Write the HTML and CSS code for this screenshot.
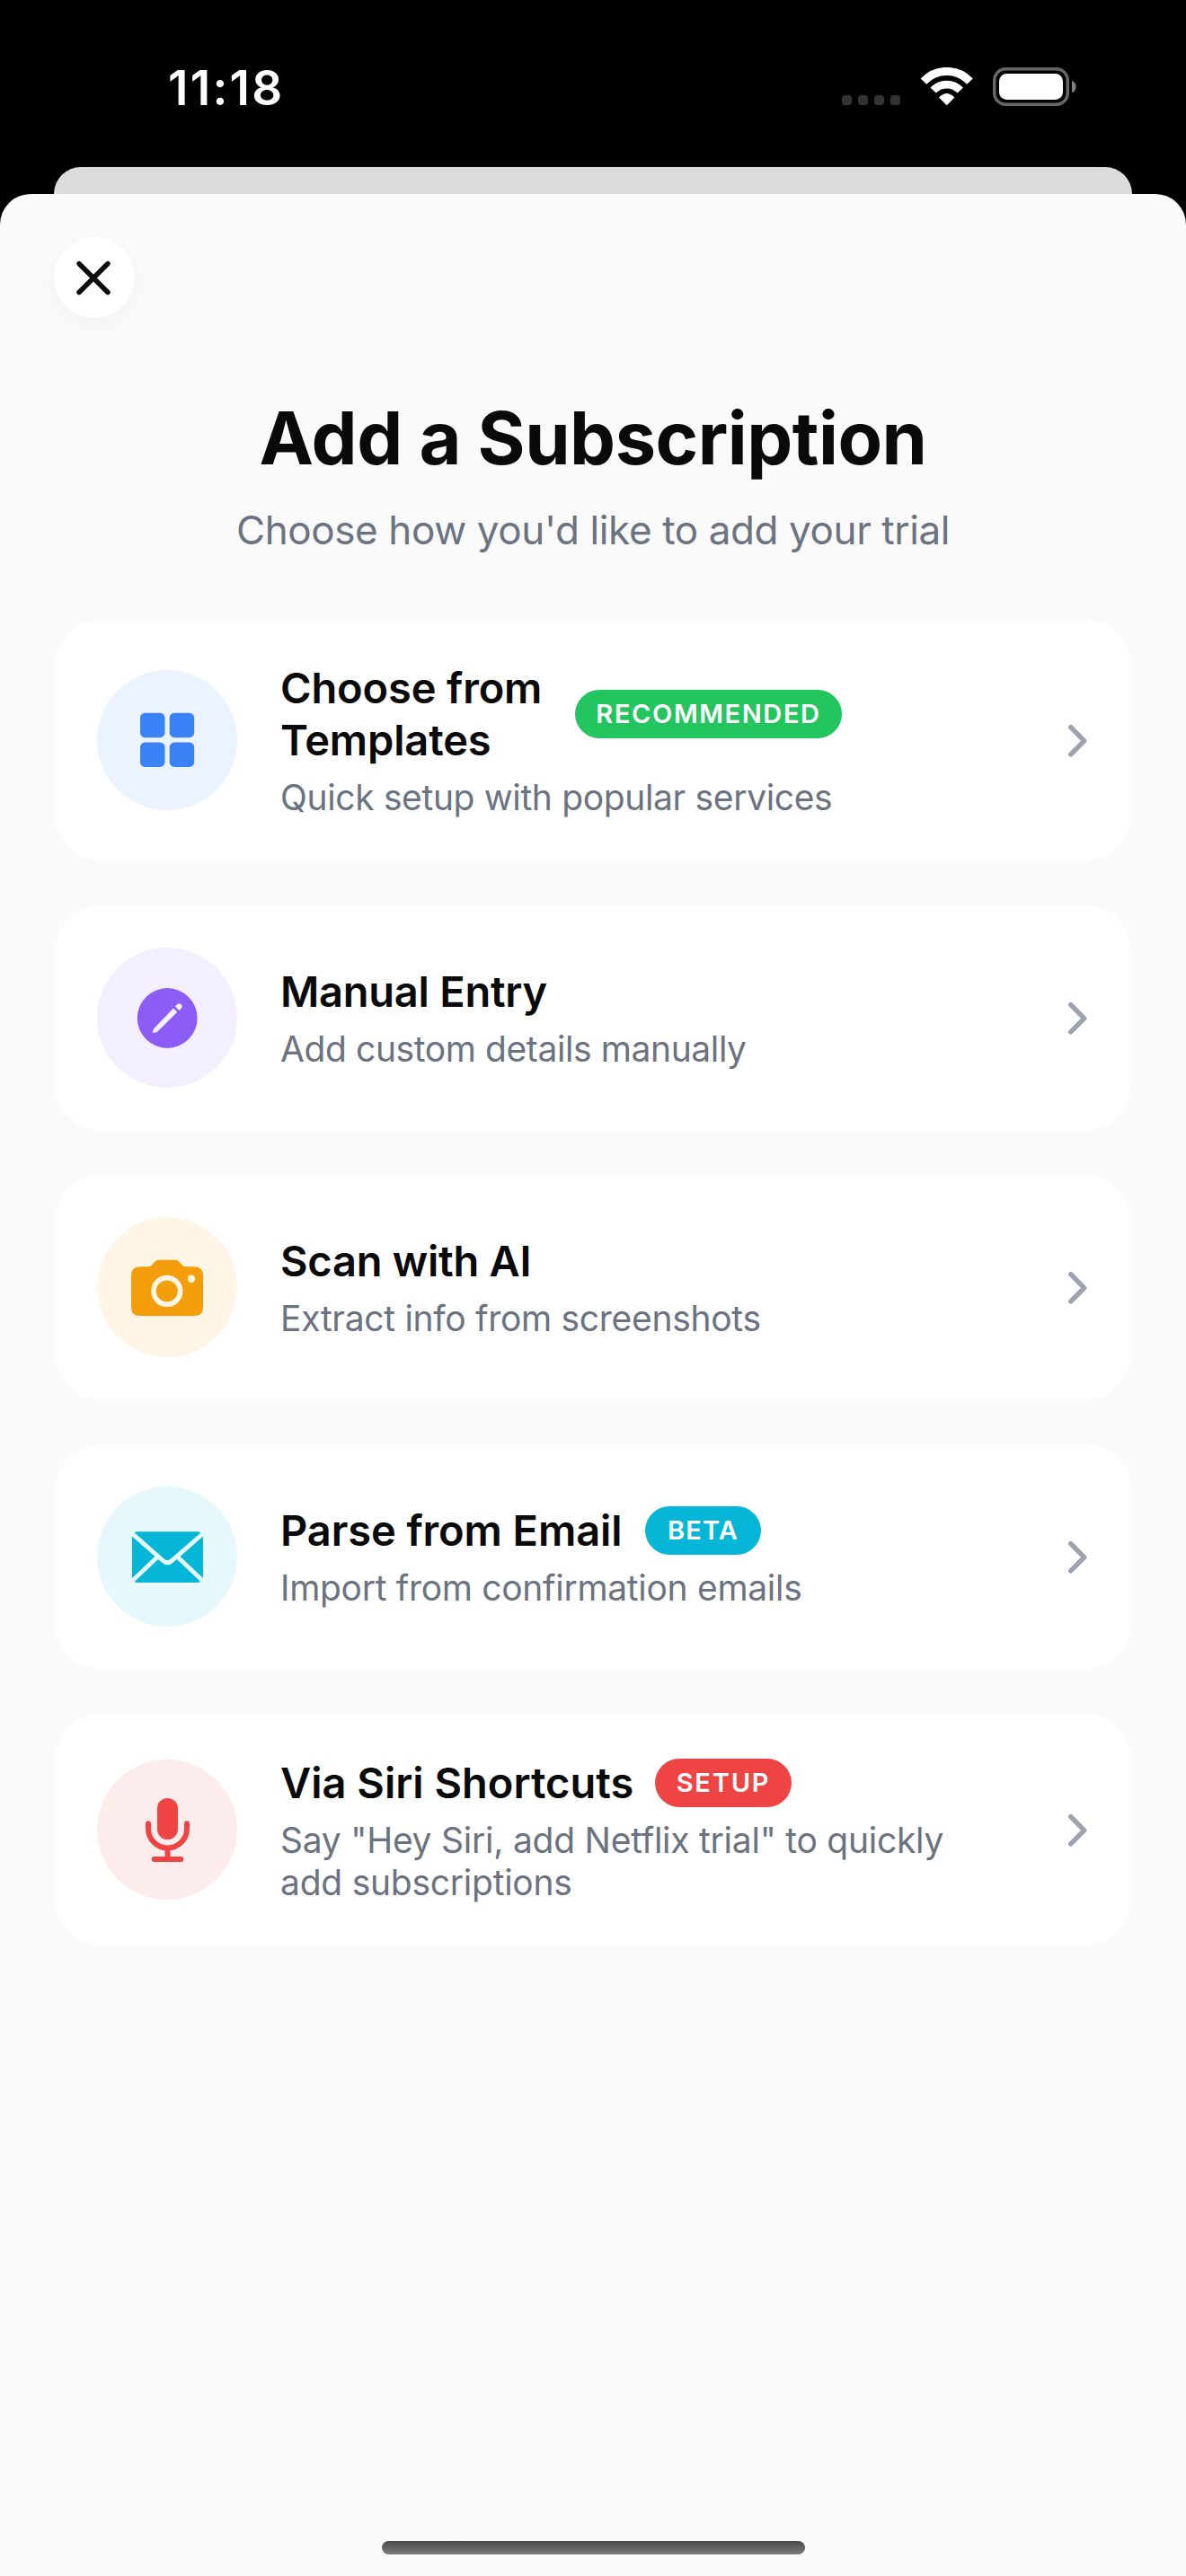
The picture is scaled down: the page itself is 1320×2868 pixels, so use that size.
FILE: index.html
```
<!DOCTYPE html>
<html lang="en">
<head>
<meta charset="utf-8">
<title>Add a Subscription</title>
<link rel="stylesheet" href="styles.css">
</head>
<body>
<header class="status">
  <span class="time">11:18</span>
  <div class="indicators">
    <div class="signal"><i></i><i></i><i></i><i></i></div>
    <svg class="wifi" width="59" height="43" viewBox="0 0 59 43" fill="none" stroke="#fff">
      <path d="M3.9 15.6A35.3 35.3 0 0 1 55.5 15.6" stroke-width="9"/>
      <path d="M14.6 25.6A20.7 20.7 0 0 1 44.8 25.6" stroke-width="8.7"/>
      <path d="M21 33.6Q29.7 24.4 38.4 33.6L30.6 41.6Q29.7 42.4 28.8 41.6Z" fill="#fff" stroke="none"/>
    </svg>
    <svg class="battery" width="93" height="43" viewBox="0 0 93 43">
      <rect x="1.75" y="1.75" width="81.5" height="39.5" rx="12.5" fill="none" stroke="#666" stroke-width="3.5"/>
      <rect x="7" y="7" width="71" height="29" rx="8.5" fill="#fff"/>
      <path d="M88 14.7a7.4 7.4 0 0 1 0 13.6z" fill="#808080"/>
    </svg>
  </div>
</header>
<div class="back-sheet"></div>
<main class="sheet">
  <button class="close" aria-label="Close">
    <svg width="46" height="46" viewBox="0 0 46 46" fill="none" stroke="#0a0a0a" stroke-width="5.4" stroke-linecap="round"><path d="M6 7.5L38 39.5M38 7.5L6 39.5"/></svg>
  </button>
  <h1>Add a Subscription</h1>
  <p class="subtitle">Choose how you'd like to add your trial</p>

  <div class="options">
    <section class="card templates">
      <div class="icon"><svg width="80" height="80" viewBox="0 0 80 80" fill="#3b82f6"><rect x="10" y="9.7" width="27.5" height="27.5" rx="5.5"/><rect x="42.7" y="9.7" width="27.5" height="27.5" rx="5.5"/><rect x="10" y="42.4" width="27.5" height="27.5" rx="5.5"/><rect x="42.7" y="42.4" width="27.5" height="27.5" rx="5.5"/></svg></div>
      <div class="text">
        <div class="heading"><h2>Choose from<br>Templates</h2><span class="badge">RECOMMENDED</span></div>
        <p>Quick setup with popular services</p>
      </div>
      <svg class="chevron" width="24" height="40" viewBox="0 0 24 40"><path d="M3.8 5.7L18.7 20.8L3.8 35.9"/></svg>
    </section>

    <section class="card manual">
      <div class="icon"><svg width="80" height="80" viewBox="0 0 80 80"><circle cx="40.2" cy="40.5" r="33.4" fill="#8b5cf6"/><g fill="#f3effe"><path d="M24.2 57.1Q23.6 56.9 23.9 55.6Q24.4 52.9 25.6 51.8L47 29.4L51.3 33.7L29.4 55.6Q28 56.7 24.2 57.1Z"/><path d="M48.9 27.6L51.2 25.2Q53.4 23.1 55.5 25.2Q57.8 27.4 55.8 29.6L53.3 32Z"/></g></svg></div>
      <div class="text">
        <div class="heading"><h2>Manual Entry</h2></div>
        <p>Add custom details manually</p>
      </div>
      <svg class="chevron" width="24" height="40" viewBox="0 0 24 40"><path d="M3.8 5.7L18.7 20.8L3.8 35.9"/></svg>
    </section>

    <section class="card scan">
      <div class="icon"><svg width="80" height="80" viewBox="0 0 80 80"><path d="M10 17.3H19Q21.7 17.3 23.5 15L26.4 11.6Q28 9.7 31 9.7H48.5Q51.5 9.7 53.2 11.6L56.2 15Q58 17.3 61 17.3H70Q80 17.3 80 27.3V62.5Q80 72 70 72H10Q0 72 0 62.5V27.3Q0 17.3 10 17.3Z" fill="#f59e0b"/><circle cx="39.8" cy="44.4" r="14.8" fill="none" stroke="#fef5e7" stroke-width="5.7"/><circle cx="67" cy="30.8" r="4.2" fill="#fef5e7"/></svg></div>
      <div class="text">
        <div class="heading"><h2>Scan with AI</h2></div>
        <p>Extract info from screenshots</p>
      </div>
      <svg class="chevron" width="24" height="40" viewBox="0 0 24 40"><path d="M3.8 5.7L18.7 20.8L3.8 35.9"/></svg>
    </section>

    <section class="card email">
      <div class="icon"><svg width="80" height="80" viewBox="0 0 80 80"><rect x="1" y="12.3" width="79" height="56.7" rx="6" fill="#06b6d6"/><path d="M-1 12.6L35.5 44.6Q40.4 49 45.3 44.6L82 12.6M-1 69.3L28.6 41M82 69.3L52.2 41" fill="none" stroke="#e6f8fc" stroke-width="4.8"/></svg></div>
      <div class="text">
        <div class="heading"><h2>Parse from Email</h2><span class="badge">BETA</span></div>
        <p>Import from confirmation emails</p>
      </div>
      <svg class="chevron" width="24" height="40" viewBox="0 0 24 40"><path d="M3.8 5.7L18.7 20.8L3.8 35.9"/></svg>
    </section>

    <section class="card siri">
      <div class="icon"><svg width="80" height="80" viewBox="0 0 80 80" fill="none" stroke="#ef4444" stroke-width="6" stroke-linecap="round"><rect x="29" y="5" width="23" height="46" rx="11.5" fill="#ef4444" stroke="none"/><path d="M19 33.3V39A21.5 21.5 0 0 0 62 39V33.3M40.5 61V72M25.7 73H55.3"/></svg></div>
      <div class="text">
        <div class="heading"><h2>Via Siri Shortcuts</h2><span class="badge">SETUP</span></div>
        <p>Say "Hey Siri, add Netflix trial" to quickly<br>add subscriptions</p>
      </div>
      <svg class="chevron" width="24" height="40" viewBox="0 0 24 40"><path d="M3.8 5.7L18.7 20.8L3.8 35.9"/></svg>
    </section>
  </div>
  <div class="home"></div>
</main>
</body>
</html>
```
FILE: styles.css
```
* { box-sizing: border-box; margin: 0; padding: 0; }
body {
  width: 1320px;
  height: 2868px;
  display: flex;
  flex-direction: column;
  background: #000;
  font-family: Inter, "Liberation Sans", sans-serif;
  color: #0a0a0a;
  overflow: hidden;
}
svg { display: block; flex: none; }

.status {
  height: 186px;
  flex: none;
  display: flex;
  justify-content: space-between;
  align-items: flex-start;
  padding: 66px 122px 0 187px;
}
.time { font-size: 53px; line-height: 64px; font-weight: 600; letter-spacing: 2.3px; color: #fff; }
.indicators { display: flex; align-items: flex-end; margin-top: 9px; }
.signal { display: flex; gap: 7px; margin: 0 22px 1px 0; }
.signal i { width: 11px; height: 11px; border-radius: 3.5px; background: #333; }
.wifi { margin-right: 22px; }

.back-sheet { flex: none; height: 30px; margin: 0 60px; background: #dcdcdc; border-radius: 30px 30px 0 0; }
.sheet {
  flex: 1;
  display: flex;
  flex-direction: column;
  padding: 48px 60px 24px;
  background: #fafafa;
  border-radius: 34px 34px 0 0;
}
.close {
  width: 90px;
  height: 90px;
  display: grid;
  place-items: center;
  border: 0;
  border-radius: 50%;
  background: #fff;
  box-shadow: 0 6px 24px rgba(0, 0, 0, .04);
}
h1 {
  margin-top: 85px;
  font-size: 81px;
  line-height: 98px;
  font-weight: 700;
  letter-spacing: -.5px;
  text-align: center;
}
.subtitle {
  margin-top: 26px;
  font-size: 44px;
  line-height: 54px;
  letter-spacing: -.39px;
  color: #6b7280;
  text-align: center;
}
.options { display: flex; flex-direction: column; gap: 48px; margin-top: 72px; }
.card {
  height: 252px;
  display: flex;
  align-items: center;
  gap: 48px;
  padding: 0 46px;
  background: #fff;
  border: 2px solid #fcfcfc;
  border-radius: 52px;
}
.templates { height: 270px; }
.siri { height: 260px; }
.icon {
  flex: none;
  width: 156px;
  height: 156px;
  display: grid;
  place-items: center;
  border-radius: 50%;
}
.templates .icon { background: #ebf3fe; }
.manual .icon { background: #f3effe; }
.scan .icon { background: #fef5e7; }
.email .icon { background: #e6f8fc; }
.siri .icon { background: #fdecec; }

.text { flex: 1; display: flex; flex-direction: column; gap: 11px; }
.heading { display: flex; align-items: center; gap: 24px; }
h2 { font-size: 47px; line-height: 58px; font-weight: 600; letter-spacing: -.25px; white-space: nowrap; }
.text p { font-size: 39px; line-height: 47px; letter-spacing: -.35px; color: #6b7280; white-space: nowrap; }
.templates h2 { width: 304px; letter-spacing: -.15px; }
.email h2 { width: 382px; letter-spacing: -.1px; }
.siri h2 { width: 393px; letter-spacing: 0; }
.manual .text p { letter-spacing: -.4px; }
.scan .text p, .email .text p { letter-spacing: -.3px; }
.siri .text p { letter-spacing: -.25px; }

.badge {
  height: 54px;
  border-radius: 27px;
  font-size: 29px;
  line-height: 54px;
  font-weight: 600;
  text-align: center;
  color: #fff;
}
.templates .badge { width: 297px; background: #22c55e; letter-spacing: 1.6px; }
.email .badge { width: 129px; background: #06b6d6; letter-spacing: 1.2px; }
.siri .badge { width: 152px; background: #ef4444; letter-spacing: 1.8px; }

.chevron path { fill: none; stroke: #9ca3af; stroke-width: 5.4; stroke-linecap: round; stroke-linejoin: round; }

.home {
  width: 471px;
  height: 15px;
  margin: auto auto 0;
  border-radius: 8px;
  background: linear-gradient(#4a4a4a, #7c7c7c);
}
```
